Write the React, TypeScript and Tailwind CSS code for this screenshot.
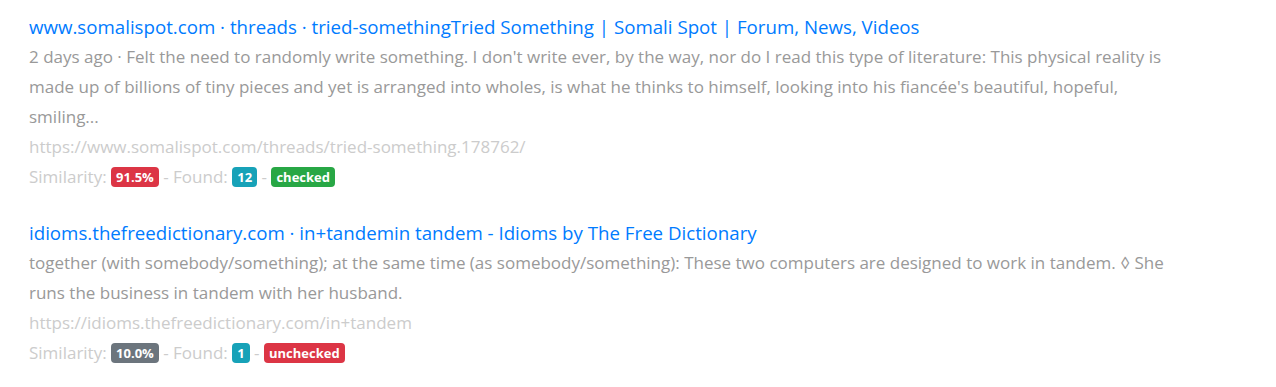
type Result = {
  title: string
  snippet: string
  url: string
  similarity: string
  similarityTone: string
  found: number
  checked: boolean
}

const results: Result[] = [
  {
    title:
      'www.somalispot.com · threads · tried-somethingTried Something | Somali Spot | Forum, News, Videos',
    snippet:
      "2 days ago · Felt the need to randomly write something. I don't write ever, by the way, nor do I read this type of literature: This physical reality is made up of billions of tiny pieces and yet is arranged into wholes, is what he thinks to himself, looking into his fiancée's beautiful, hopeful, smiling...",
    url: 'https://www.somalispot.com/threads/tried-something.178762/',
    similarity: '91.5%',
    similarityTone: 'bg-[#dc3545]',
    found: 12,
    checked: true,
  },
  {
    title: 'idioms.thefreedictionary.com · in+tandemin tandem - Idioms by The Free Dictionary',
    snippet:
      'together (with somebody/something); at the same time (as somebody/something): These two computers are designed to work in tandem. ◊ She runs the business in tandem with her husband.',
    url: 'https://idioms.thefreedictionary.com/in+tandem',
    similarity: '10.0%',
    similarityTone: 'bg-[#6c757d]',
    found: 1,
    checked: false,
  },
]

function Badge({ tone, children }: { tone: string; children: React.ReactNode }) {
  return (
    <span
      className={`inline-block rounded-[4px] px-[5px] py-[2px] text-[13px] leading-[16px] font-bold text-white align-[1px] ${tone}`}
    >
      {children}
    </span>
  )
}

function ResultItem({ result }: { result: Result }) {
  return (
    <div className="mb-[26px]">
      <a href="#" className="block text-[18.7px] leading-[30px] text-[#007bff]">
        {result.title}
      </a>
      <p className="text-[17px] leading-[30px] text-[#999999]">{result.snippet}</p>
      <div className="text-[17px] leading-[30px] text-[#cccccc]">{result.url}</div>
      <div className="text-[17px] leading-[30px] text-[#cccccc]">
        Similarity: <Badge tone={result.similarityTone}>{result.similarity}</Badge> - Found:{' '}
        <Badge tone="bg-[#17a2b8]">{result.found}</Badge> -{' '}
        <Badge tone={result.checked ? 'bg-[#28a745]' : 'bg-[#dc3545]'}>
          {result.checked ? 'checked' : 'unchecked'}
        </Badge>
      </div>
    </div>
  )
}

export default function App() {
  return (
    <div className="min-h-[387px] bg-white pt-[12px] pl-[29px] font-['Open_Sans',sans-serif]">
      <div className="w-[1150px]">
        {results.map((r) => (
          <ResultItem key={r.url} result={r} />
        ))}
      </div>
    </div>
  )
}
